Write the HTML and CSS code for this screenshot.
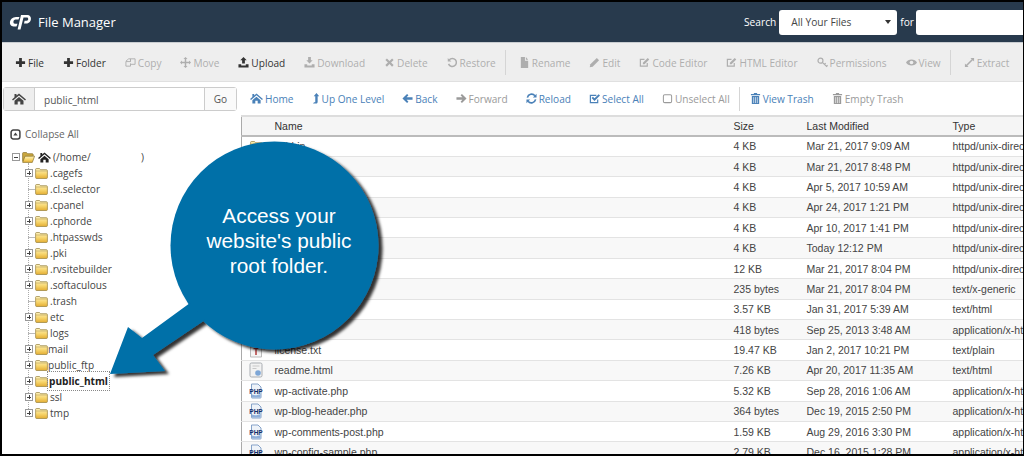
FILE: index.html
```html
<!DOCTYPE html>
<html lang="en">
<head>
<meta charset="utf-8">
<title>File Manager</title>
<link rel="stylesheet" href="styles.css">
</head>
<body>
<svg class="defs" width="0" height="0" aria-hidden="true">
  <defs>
    <linearGradient id="g-fold" x1="0" y1="0" x2="0" y2="1"><stop offset="0" stop-color="#fdf2bd"/><stop offset=".55" stop-color="#f7d56c"/><stop offset="1" stop-color="#e3ad34"/></linearGradient>
    <symbol id="i-plus" viewBox="0 0 12 12"><path d="M4.500 1h3v3.500H11v3H7.500V11h-3V7.500H1v-3h3.500z"/></symbol>
    <symbol id="i-copy" viewBox="0 0 12 12"><path d="M1 4.500 4 2h2v3H1v5h5V7M6 2h5v6H6M6 2v3" fill="none" stroke="currentColor"/></symbol>
    <symbol id="i-move" viewBox="0 0 12 12"><path d="M6 0l2.200 2.200H6.800v3h3V3.800L12 6 9.800 8.200V6.800h-3v3h1.400L6 12 3.800 9.800h1.400v-3h-3v1.400L0 6l2.200-2.200v1.400h3v-3H3.800z"/></symbol>
    <symbol id="i-up" viewBox="0 0 12 12"><path d="M6 0l3.500 3.500H7.500V7h-3V3.500h-2zM.5 8H3.500v1.200h5V8h3v3.500H.5z"/></symbol>
    <symbol id="i-down" viewBox="0 0 12 12"><path d="M4.500 0h3v3.500h2L6 7 2.500 3.500h2zM.5 8H3.500v1.200h5V8h3v3.500H.5z"/></symbol>
    <symbol id="i-x" viewBox="0 0 12 12"><path d="M3.200 1.500 6 4.300l2.800-2.800 1.700 1.700L7.700 6l2.800 2.800-1.700 1.700L6 7.700l-2.800 2.800-1.700-1.700L4.300 6 1.500 3.200z"/></symbol>
    <symbol id="i-restore" viewBox="0 0 12 12"><path d="M2.400 3.200A4.400 4.400 0 1 1 1.700 7.500" fill="none" stroke="currentColor" stroke-width="1.600"/><path d="M.8 1v4h4z"/></symbol>
    <symbol id="i-file" viewBox="0 0 12 12"><path d="M2 0h4.500v4H10v8H2zM7.500 0 10 3H7.500z"/></symbol>
    <symbol id="i-pencil" viewBox="0 0 12 12"><path d="M8.500 1 11 3.500 4 10.500 0.800 11.200 1.500 8z"/></symbol>
    <symbol id="i-edit" viewBox="0 0 12 12"><path d="M9 6.500V10H1.500V2.500H6" fill="none" stroke="currentColor" stroke-width="1.300"/><path d="M9.500 1 11.200 2.700 6 8H4.200V6.200z"/></symbol>
    <symbol id="i-key" viewBox="0 0 12 12"><circle cx="3.800" cy="4" r="2.700" fill="none" stroke="currentColor" stroke-width="1.300"/><path d="M5.800 5.800 10.500 10.200 11.500 9M8 8l1.500-1.200" fill="none" stroke="currentColor" stroke-width="1.300"/></symbol>
    <symbol id="i-eye" viewBox="0 0 12 12"><path d="M0 6c2-4.200 10-4.200 12 0-2 4.200-10 4.200-12 0z"/><circle cx="6" cy="6" r="2" fill="#eee"/></symbol>
    <symbol id="i-expand" viewBox="0 0 12 12"><path d="M7 1h4v4L9.600 3.600 3.600 9.600 5 11H1V7l1.400 1.400 6-6z"/></symbol>
    <symbol id="i-home" viewBox="0 0 14 12"><path d="M7 .5 14 6.500 13 7.500 7 2.500 1 7.500 0 6.500 2.500 4.300V1h2v1.600zM2.500 7.800 7 4l4.500 3.800V11.500H8.300V8.500H5.700v3H2.500z"/></symbol>
    <symbol id="i-upl" viewBox="0 0 7 12"><path d="M4 0 7 3.500H5.300V9.500c0 1.500-.8 2-2 2H.2L1.400 10h1.300V3.500H1z"/></symbol>
    <symbol id="i-back" viewBox="0 0 12 12"><path d="M5.500 1 7 2.500 5 4.600h6.500v2.800H5L7 9.500 5.500 11 .5 6z"/></symbol>
    <symbol id="i-fwd" viewBox="0 0 12 12"><path d="M6.500 1 5 2.500 7 4.600H.5v2.800H7L5 9.500 6.500 11l5-5z"/></symbol>
    <symbol id="i-reload" viewBox="0 0 12 12"><path d="M1.500 5A4.700 4.700 0 0 1 9.700 3M10.500 7A4.700 4.700 0 0 1 2.300 9" fill="none" stroke="currentColor" stroke-width="1.800"/><path d="M11.500 .8v4h-4zM.5 11.200v-4h4z"/></symbol>
    <symbol id="i-check" viewBox="0 0 12 12"><path d="M9.500 7v3.500h-8v-8H8" fill="none" stroke="currentColor" stroke-width="1.300"/><path d="M2.800 5.400 4.300 4 6 5.700 10.500 1.300 12 2.800 6 8.800z"/></symbol>
    <symbol id="i-box" viewBox="0 0 12 12"><rect x="1.500" y="2" width="9" height="8.500" rx="1.500" fill="none" stroke="currentColor" stroke-width="1.100"/></symbol>
    <symbol id="i-trash" viewBox="0 0 12 12"><path d="M4.500 0h3L8 1h3v1.500H1V1h3zM2 3.200h8V12H2z"/><path d="M4 4.500V11M6 4.500V11M8 4.500V11" stroke="#fff" stroke-width=".7"/></symbol>
    <symbol id="i-collapse" viewBox="0 0 10 10"><rect x="1" y="1" width="8" height="8" rx="2" fill="none" stroke="currentColor" stroke-width="1.400"/><path d="M5 3.200 7 6H3z"/></symbol>
    <symbol id="i-folder" viewBox="0 0 13 11"><path d="M.6 2V1.300C.6.800 1 .5 1.500.5h3l1 1.200h6c.5 0 .9.400.9.900v6.900c0 .6-.4 1-1 1H1.600c-.6 0-1-.4-1-1z" fill="url(#g-fold)" stroke="#95803c" stroke-width=".7"/><path d="M1 3h11" stroke="#a8924e" stroke-width=".5"/></symbol>
    <symbol id="i-fopen" viewBox="0 0 13 11"><path d="M.6 9.500V1.300C.6.800 1 .5 1.500.5h3l1 1.200h4.800c.5 0 .9.400.9.900V4" fill="#c9a63e" stroke="#8a7431" stroke-width=".7"/><path d="M.7 10.400 3 4.200h9.600l-2.300 6.200z" fill="url(#g-fold)" stroke="#8a7431" stroke-width=".7"/></symbol>
    <symbol id="i-php" viewBox="0 0 14 16"><path d="M2.500 1h6.500l3 3v10.500c0 .3-.2.500-.5.500H3c-.3 0-.5-.2-.5-.5z" fill="#eef3f9" stroke="#86a3c9"/><path d="M3 11.500c3 1.500 6 .5 8.500-.5V14.500H3z" fill="#8fb0da"/><text class="php-t" x="7" y="10.500">PHP</text></symbol>
    <symbol id="i-page" viewBox="0 0 14 16"><rect x="1" y="1" width="12" height="14" rx="1.500" fill="#f2f2f2" stroke="#a9adb2"/><path d="M3.500 4h7M3.500 6.500h4" stroke="#c8c8c8"/><circle cx="9" cy="11" r="2.800" fill="#7da6d6"/></symbol>
    <symbol id="i-text" viewBox="0 0 14 16"><path d="M1.500 1h8l3 3v11h-11z" fill="#f5f5f5" stroke="#bbb"/><path d="M4.500 6h5v1.300H7.700V13H6.300V7.300H4.500z" fill="#b03030"/></symbol>
  </defs>
</svg>

<div class="page">
  <header class="topbar">
    <div class="brand">
      <svg class="logo" viewBox="0 0 24 16" aria-hidden="true"><path d="M8 3h3.500L10.500 5.500H7.500C5 5.500 4.700 9.800 7 9.800h2.500L8.500 12.500H5.500C0 12.500 .8 3 8 3z" fill="#fff"/><path d="M13 1h6.500c5 0 4.500 8.500-1.200 8.500H16l.6-2.700h2c2 0 2.200-3.200.3-3.200h-3.400L12.500 15.500H9.600L13 1z" fill="#fff"/></svg>
      <span class="brand-name">File Manager</span>
    </div>
    <form class="search">
      <span>Search</span>
      <div class="select"><span>All Your Files</span><i class="caret"></i></div>
      <span>for</span>
      <div class="search-input"></div>
    </form>
  </header>

  <nav class="toolbar">
    <a class="tool on"><svg class="ic"><use href="#i-plus"/></svg>File</a>
    <a class="tool on"><svg class="ic"><use href="#i-plus"/></svg>Folder</a>
    <a class="tool"><svg class="ic"><use href="#i-copy"/></svg>Copy</a>
    <a class="tool"><svg class="ic"><use href="#i-move"/></svg>Move</a>
    <a class="tool on"><svg class="ic"><use href="#i-up"/></svg>Upload</a>
    <a class="tool"><svg class="ic"><use href="#i-down"/></svg>Download</a>
    <a class="tool"><svg class="ic"><use href="#i-x"/></svg>Delete</a>
    <a class="tool"><svg class="ic"><use href="#i-restore"/></svg>Restore</a>
    <span class="sep"></span>
    <a class="tool"><svg class="ic"><use href="#i-file"/></svg>Rename</a>
    <a class="tool"><svg class="ic"><use href="#i-pencil"/></svg>Edit</a>
    <a class="tool"><svg class="ic"><use href="#i-edit"/></svg>Code Editor</a>
    <a class="tool"><svg class="ic"><use href="#i-edit"/></svg>HTML Editor</a>
    <a class="tool"><svg class="ic"><use href="#i-key"/></svg>Permissions</a>
    <a class="tool"><svg class="ic"><use href="#i-eye"/></svg>View</a>
    <span class="sep"></span>
    <a class="tool"><svg class="ic"><use href="#i-expand"/></svg>Extract</a>
  </nav>

  <div class="main">
    <aside class="side">
      <div class="path">
        <span class="path-home"><svg class="ic-home"><use href="#i-home"/></svg></span>
        <span class="path-val">public_html</span>
        <span class="path-go">Go</span>
      </div>
      <div class="collapse"><svg class="collapse-ic"><use href="#i-collapse"/></svg>Collapse All</div>
      <ul class="tree">
        <li class="root"><i class="tog minus"></i><svg class="fold"><use href="#i-fopen"/></svg><svg class="ic-root"><use href="#i-home"/></svg><span class="root-label"><span>(/home/</span><span>)</span></span></li>
        <li><i class="tog"></i><svg class="fold"><use href="#i-folder"/></svg><span>.cagefs</span></li>
        <li><i class="dash"></i><svg class="fold"><use href="#i-folder"/></svg><span>.cl.selector</span></li>
        <li><i class="tog"></i><svg class="fold"><use href="#i-folder"/></svg><span>.cpanel</span></li>
        <li><i class="tog"></i><svg class="fold"><use href="#i-folder"/></svg><span>.cphorde</span></li>
        <li><i class="dash"></i><svg class="fold"><use href="#i-folder"/></svg><span>.htpasswds</span></li>
        <li><i class="tog"></i><svg class="fold"><use href="#i-folder"/></svg><span>.pki</span></li>
        <li><i class="tog"></i><svg class="fold"><use href="#i-folder"/></svg><span>.rvsitebuilder</span></li>
        <li><i class="tog"></i><svg class="fold"><use href="#i-folder"/></svg><span>.softaculous</span></li>
        <li><i class="dash"></i><svg class="fold"><use href="#i-folder"/></svg><span>.trash</span></li>
        <li><i class="tog"></i><svg class="fold"><use href="#i-folder"/></svg><span>etc</span></li>
        <li><i class="dash"></i><svg class="fold"><use href="#i-folder"/></svg><span>logs</span></li>
        <li><i class="tog"></i><svg class="fold"><use href="#i-folder"/></svg><span class="tight">mail</span></li>
        <li><i class="tog"></i><svg class="fold"><use href="#i-folder"/></svg><span class="tight">public_ftp</span></li>
        <li><i class="tog"></i><svg class="fold"><use href="#i-folder"/></svg><span class="tight sel">public_html</span></li>
        <li><i class="tog"></i><svg class="fold"><use href="#i-folder"/></svg><span>ssl</span></li>
        <li><i class="tog"></i><svg class="fold"><use href="#i-folder"/></svg><span>tmp</span></li>
      </ul>
    </aside>

    <section class="content">
      <div class="actions">
        <a class="act"><svg class="ic-h"><use href="#i-home"/></svg>Home</a>
        <a class="act"><svg class="ic-u"><use href="#i-upl"/></svg>Up One Level</a>
        <a class="act"><svg class="ic"><use href="#i-back"/></svg>Back</a>
        <a class="act off"><svg class="ic"><use href="#i-fwd"/></svg>Forward</a>
        <a class="act"><svg class="ic"><use href="#i-reload"/></svg>Reload</a>
        <a class="act"><svg class="ic"><use href="#i-check"/></svg>Select All</a>
        <a class="act off"><svg class="ic"><use href="#i-box"/></svg>Unselect All</a>
        <span class="sep short"></span>
        <a class="act"><svg class="ic"><use href="#i-trash"/></svg>View Trash</a>
        <a class="act off"><svg class="ic"><use href="#i-trash"/></svg>Empty Trash</a>
      </div>
      <table class="files">
        <colgroup><col class="c-ic"><col class="c-name"><col class="c-size"><col class="c-mod"><col class="c-type"></colgroup>
        <thead><tr><th></th><th>Name</th><th>Size</th><th>Last Modified</th><th>Type</th></tr></thead>
        <tbody>
          <tr><td><svg class="fi-f"><use href="#i-folder"/></svg></td><td>cgi-bin</td><td>4 KB</td><td>Mar 21, 2017 9:09 AM</td><td>httpd/unix-directory</td></tr>
          <tr><td></td><td></td><td>4 KB</td><td>Mar 21, 2017 8:48 PM</td><td>httpd/unix-directory</td></tr>
          <tr><td></td><td></td><td>4 KB</td><td>Apr 5, 2017 10:59 AM</td><td>httpd/unix-directory</td></tr>
          <tr><td></td><td></td><td>4 KB</td><td>Apr 24, 2017 1:21 PM</td><td>httpd/unix-directory</td></tr>
          <tr><td></td><td></td><td>4 KB</td><td>Apr 10, 2017 1:41 PM</td><td>httpd/unix-directory</td></tr>
          <tr><td></td><td></td><td>4 KB</td><td>Today 12:12 PM</td><td>httpd/unix-directory</td></tr>
          <tr><td></td><td></td><td>12 KB</td><td>Mar 21, 2017 8:04 PM</td><td>httpd/unix-directory</td></tr>
          <tr><td></td><td></td><td>235 bytes</td><td>Mar 21, 2017 8:04 PM</td><td>text/x-generic</td></tr>
          <tr><td></td><td></td><td>3.57 KB</td><td>Jan 31, 2017 5:39 AM</td><td>text/html</td></tr>
          <tr><td></td><td></td><td>418 bytes</td><td>Sep 25, 2013 3:48 AM</td><td>application/x-httpd-php</td></tr>
          <tr><td><svg class="fi"><use href="#i-text"/></svg></td><td>license.txt</td><td>19.47 KB</td><td>Jan 2, 2017 10:21 PM</td><td>text/plain</td></tr>
          <tr><td><svg class="fi"><use href="#i-page"/></svg></td><td>readme.html</td><td>7.26 KB</td><td>Apr 20, 2017 11:35 AM</td><td>text/html</td></tr>
          <tr><td><svg class="fi"><use href="#i-php"/></svg></td><td>wp-activate.php</td><td>5.32 KB</td><td>Sep 28, 2016 1:06 AM</td><td>application/x-httpd-php</td></tr>
          <tr><td><svg class="fi"><use href="#i-php"/></svg></td><td>wp-blog-header.php</td><td>364 bytes</td><td>Dec 19, 2015 2:50 PM</td><td>application/x-httpd-php</td></tr>
          <tr><td><svg class="fi"><use href="#i-php"/></svg></td><td>wp-comments-post.php</td><td>1.59 KB</td><td>Aug 29, 2016 3:30 PM</td><td>application/x-httpd-php</td></tr>
          <tr><td><svg class="fi"><use href="#i-php"/></svg></td><td>wp-config-sample.php</td><td>2.79 KB</td><td>Dec 16, 2015 1:28 PM</td><td>application/x-httpd-php</td></tr>
        </tbody>
      </table>
    </section>
  </div>

  <svg class="bubble" viewBox="0 0 1024 456" aria-hidden="true">
    <defs><filter id="sh" x="-20%" y="-20%" width="140%" height="140%"><feDropShadow dx="4" dy="3" stdDeviation="1.800" flood-color="#000" flood-opacity=".8"/></filter></defs>
    <g filter="url(#sh)" fill="#036fa8">
      <circle cx="274.500" cy="245.500" r="104"/>
      <path d="M110 374 128 327 142 338 190 303 205 320 153 355 165 371Z"/>
    </g>
  </svg>
  <p class="bubble-text">Access your<br>website's public<br>root folder.</p>
</div>
</body>
</html>
```
FILE: styles.css
```css
* { box-sizing: border-box; }
html, body { margin: 0; padding: 0; }
body { width: 1024px; height: 456px; overflow: hidden; background: #fff; }
.defs { position: absolute; }
.page {
  position: relative; width: 1024px; height: 456px; overflow: hidden;
  border: solid #000; border-width: 2px 1px 2px 2px;
  display: flex; flex-direction: column;
  font: 10.100px/16px "Open Sans", sans-serif; color: #333; background: #fff;
}
.topbar { flex: none; height: 40px; background: #283a4d; display: flex; align-items: center; justify-content: space-between; color: #fff; }
.brand { display: flex; align-items: center; padding-left: 6px; }
.logo { width: 24px; height: 16px; margin-right: 6px; }
.brand-name { font-size: 13px; }
.search { display: flex; align-items: center; margin: 0; font-size: 10.200px; }
.select { width: 118px; height: 25px; background: #fff; border-radius: 3px; color: #444; display: flex; align-items: center; justify-content: space-between; padding: 0 6px 0 12px; margin: 0 3px; }
.caret { border: 3px solid transparent; border-top: 4px solid #333; border-bottom: 0; }
.search-input { width: 107px; height: 25px; background: #fff; border-radius: 3px 0 0 3px; margin-left: 2px; }

.toolbar { flex: none; height: 40px; padding: 1px 0 0 13px; background: #eee; border-top: 1px solid #c9cdd1; border-bottom: 1px solid #e0e0e0; display: flex; align-items: center; }
.tool { display: flex; align-items: center; gap: 2px; margin-right: 19px; white-space: nowrap; color: #aeaeae; }
.tool.on { color: #333; }
.ic { width: 11px; height: 11px; fill: currentColor; flex: none; }
.sep { width: 1px; height: 25px; background: #d5d5d5; margin: 0 13px 0 -10px; flex: none; }

.main { flex: 1; display: flex; min-height: 0; }
.side { flex: none; width: 239px; }
.path { display: flex; height: 24px; margin: 5px 0 0 1px; width: 234px; border: 1px solid #ccc; border-radius: 3px; }
.path-home { width: 31px; background: #eee; border-right: 1px solid #ccc; display: flex; align-items: center; justify-content: center; color: #444; }
.ic-home { width: 14px; height: 12px; fill: currentColor; }
.path-val { flex: 1; padding: 4px 0 0 9px; color: #555; }
.path-go { width: 32px; border-left: 1px solid #ccc; text-align: center; padding-top: 3px; color: #555; background: #fafafa; }
.collapse { display: flex; align-items: center; margin: 15px 0 0 8px; color: #666; height: 16px; }
.collapse-ic { width: 11px; height: 11px; fill: #444; color: #444; margin-right: 4px; }
.tree { list-style: none; margin: 7px 0 0; padding: 0 0 0 23px; color: #444; position: relative; }
.tree::before { content: ""; position: absolute; left: 26px; top: 14px; height: 248px; border-left: 1px dotted #aaa; }
.tree li { display: flex; align-items: center; height: 16px; position: relative; white-space: nowrap; }
.tree .root { margin-left: -13px; }
.tog { width: 8px; height: 8px; border: 1px solid #999; background: linear-gradient(#444,#444) center/4px 1px no-repeat, linear-gradient(#444,#444) center/1px 4px no-repeat, #fff; margin-right: 2px; flex: none; position: relative; }
.tog.minus { background: linear-gradient(#444,#444) center/4px 1px no-repeat, #fff; }
.dash { width: 7px; height: 1px; background: #bbb; flex: none; margin: 0 0 0 3px; }
.fold { width: 13px; height: 11px; margin-right: 2px; flex: none; }
.ic-root { width: 13px; height: 11px; fill: #222; margin: 0 2px 0 1px; }
.root-label { display: flex; width: 91px; justify-content: space-between; }
.tight { margin-left: -2px; }
.sel { font-weight: 700; color: #222; outline: 1px dotted #888; padding: 1px; }

.content { flex: 1; min-width: 0; }
.actions { display: flex; align-items: center; height: 33px; padding-left: 9px; }
.act { display: flex; align-items: center; gap: 2px; margin-right: 18px; white-space: nowrap; color: #4a81b8; }
.act.off { color: #9a9a9a; }
.ic-h { width: 13px; height: 11px; fill: currentColor; flex: none; }
.ic-u { width: 8px; height: 11px; fill: currentColor; flex: none; }
.sep.short { margin: 0 10px 0 -9px; height: 24px; }
.files { border-collapse: collapse; table-layout: fixed; width: 840px; font: 10.500px/14px "Liberation Sans", sans-serif; color: #444; border-left: 1px solid #aaa; border-top: 2px solid #ddd; }
.c-ic { width: 28px; } .c-name { width: 459px; } .c-size { width: 73px; } .c-mod { width: 146px; } .c-type { width: 134px; }
.files th { height: 20px; text-align: left; font-weight: 400; color: #333; background: #f5f5f5; border-bottom: 2px solid #bbb; padding: 0 0 0 5px; white-space: nowrap; overflow: hidden; }
.files td { height: 20.400px; padding: 0 0 0 5px; border-bottom: 1px solid #e3e3e3; white-space: nowrap; overflow: hidden; }
.files tbody tr:nth-child(even) td { background: #f8f8f8; }
.fi { width: 14px; height: 16px; display: block; margin: 0 0 0 2px; }
.fi-f { width: 13px; height: 11px; display: block; margin: 0 0 0 3px; }
.php-t { font: 700 6.500px "Liberation Sans", sans-serif; fill: #12306a; text-anchor: middle; }

.bubble { position: absolute; left: -2px; top: -2px; width: 1024px; height: 456px; pointer-events: none; }
.bubble-text { position: absolute; left: 157px; top: 201px; width: 240px; margin: 0; text-align: center; font: 20.800px/25px "Liberation Sans", sans-serif; color: #fff; }
```
